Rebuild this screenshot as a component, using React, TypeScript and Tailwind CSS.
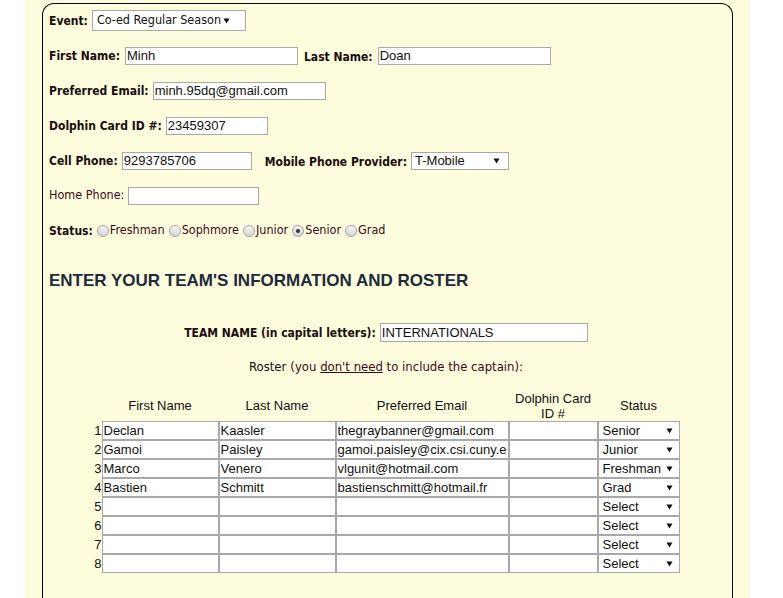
const tahoma = "font-['DejaVu_Sans_Condensed','DejaVu_Sans',Tahoma,sans-serif]"
const arial = "font-['Liberation_Sans',Arial,sans-serif]"

const roster = [
  { first: 'Declan', last: 'Kaasler', email: 'thegraybanner@gmail.com', status: 'Senior' },
  { first: 'Gamoi', last: 'Paisley', email: 'gamoi.paisley@cix.csi.cuny.edu', status: 'Junior' },
  { first: 'Marco', last: 'Venero', email: 'vlgunit@hotmail.com', status: 'Freshman' },
  { first: 'Bastien', last: 'Schmitt', email: 'bastienschmitt@hotmail.fr', status: 'Grad' },
  { first: '', last: '', email: '', status: 'Select' },
  { first: '', last: '', email: '', status: 'Select' },
  { first: '', last: '', email: '', status: 'Select' },
  { first: '', last: '', email: '', status: 'Select' },
]

function Arrow() {
  return (
    <svg width="7" height="6" viewBox="0 0 7 6" className="shrink-0">
      <polygon points="0.5,0.5 6.5,0.5 3.5,5.5" fill="#111" />
    </svg>
  )
}

function TextBox({ value = '', className = '' }: { value?: string; className?: string }) {
  return (
    <input
      type="text"
      defaultValue={value}
      className={`h-[18px] border border-[#a9a9a9] bg-white px-[1px] text-[13px] text-[#111] outline-none ${arial} ${className}`}
    />
  )
}

function Label({ children, bold = true }: { children: React.ReactNode; bold?: boolean }) {
  return bold ? (
    <span className="text-[12px] font-bold text-[#1a0d0d]">{children}</span>
  ) : (
    <span className="text-[12.5px] text-[#3a0c16]">{children}</span>
  )
}

function Radio({ label, checked = false }: { label: string; checked?: boolean }) {
  return (
    <span className="ml-[4px] flex items-center">
      <span className="flex h-[12px] w-[12px] items-center justify-center rounded-full border border-[#a3a3a3] bg-linear-to-b from-[#f4f4f4] to-[#d6d6d6]">
        {checked && <span className="h-[4px] w-[4px] rounded-full bg-[#333]" />}
      </span>
      <span className="ml-[1px] text-[12.5px] text-[#3a0c16]">{label}</span>
    </span>
  )
}

export default function App() {
  return (
    <div className={`min-h-[598px] bg-white ${tahoma}`}>
      <div className="ml-[25px] w-[725px] bg-[#fdfcdd] px-[17px] pt-[3px]">
        <div className="rounded-t-[12px] border border-b-0 border-black pb-[60px] pl-[6px] pr-[9px] pt-[6px]">
          {/* Captain info */}
          <div className="flex flex-col gap-[14px]">
            <div className="flex h-[21px] items-center gap-[4px]">
              <Label>Event:</Label>
              <div className="flex h-[21px] w-[154px] items-center justify-between border border-[#a9a9a9] bg-white pl-[4px] pr-[15px]">
                <span className="text-[12.5px] text-[#111]">Co-ed Regular Season</span>
                <Arrow />
              </div>
            </div>

            <div className="flex h-[21px] items-center gap-[5px]">
              <Label>First Name:</Label>
              <TextBox value="Minh" className="w-[173px]" />
              <span className="ml-[1px]">
                <Label>Last Name:</Label>
              </span>
              <TextBox value="Doan" className="w-[173px]" />
            </div>

            <div className="flex h-[21px] items-center gap-[4px]">
              <Label>Preferred Email:</Label>
              <TextBox value="minh.95dq@gmail.com" className="w-[173px]" />
            </div>

            <div className="flex h-[21px] items-center gap-[4px]">
              <Label>Dolphin Card ID #:</Label>
              <TextBox value="23459307" className="w-[102px]" />
            </div>

            <div className="flex h-[21px] items-center gap-[4px]">
              <Label>Cell Phone:</Label>
              <TextBox value="9293785706" className="w-[130px]" />
              <span className="ml-[9px]">
                <Label>Mobile Phone Provider:</Label>
              </span>
              <div className="flex h-[18px] w-[98px] items-center justify-between border border-[#a9a9a9] bg-white pl-[3px] pr-[8px]">
                <span className={`text-[13px] text-[#111] ${arial}`}>T-Mobile</span>
                <Arrow />
              </div>
            </div>

            <div className="flex h-[21px] items-center gap-[4px]">
              <Label bold={false}>Home Phone:</Label>
              <TextBox className="w-[131px]" />
            </div>

            <div className="flex h-[21px] items-center">
              <Label>Status:</Label>
              <Radio label="Freshman" />
              <Radio label="Sophmore" />
              <Radio label="Junior" />
              <Radio label="Senior" checked />
              <Radio label="Grad" />
            </div>
          </div>

          <h2 className={`mt-[30px] h-[20px] text-[17px] leading-[20px] font-bold text-[#1e2b3a] ${arial}`}>
            ENTER YOUR TEAM'S INFORMATION AND ROSTER
          </h2>

          {/* Team */}
          <div className="mt-[31px] flex h-[21px] items-center justify-center gap-[4px]">
            <Label>TEAM NAME (in capital letters):</Label>
            <TextBox value="INTERNATIONALS" className="h-[19px] w-[208px]" />
          </div>

          <div className="mt-[14px] flex h-[19px] items-center justify-center text-[13px]">
            <span className="text-[#1a0d0d]">Roster</span>
            <span className="ml-[4px] text-[#3a0c16]">
              (you <span className="underline">don't need</span> to include the captain):
            </span>
          </div>

          {/* Roster table */}
          <div className={`mx-auto mt-[14px] grid w-[587px] grid-cols-[9px_117px_117px_173px_89px_82px] text-[13px] text-[#111] ${arial}`}>
            <div />
            <div className="flex h-[31px] items-center justify-center text-center leading-[15px]">First Name</div>
            <div className="flex h-[31px] items-center justify-center text-center leading-[15px]">Last Name</div>
            <div className="flex h-[31px] items-center justify-center text-center leading-[15px]">Preferred Email</div>
            <div className="flex h-[31px] items-center justify-center text-center leading-[15px]">Dolphin Card ID #</div>
            <div className="flex h-[31px] items-center justify-center text-center leading-[15px]">Status</div>

            {roster.map((r, i) => (
              <div key={i} className="contents">
                <div className="flex h-[19px] items-center justify-end">{i + 1}</div>
                <TextBox value={r.first} className="h-[19px] w-full min-w-0" />
                <TextBox value={r.last} className="h-[19px] w-full min-w-0" />
                <TextBox value={r.email} className="h-[19px] w-full min-w-0" />
                <TextBox className="h-[19px] w-full min-w-0" />
                <div className="flex h-[19px] items-center justify-between border border-[#a9a9a9] bg-white pl-[4px] pr-[6px]">
                  <span>{r.status}</span>
                  <Arrow />
                </div>
              </div>
            ))}
          </div>
        </div>
      </div>
    </div>
  )
}
